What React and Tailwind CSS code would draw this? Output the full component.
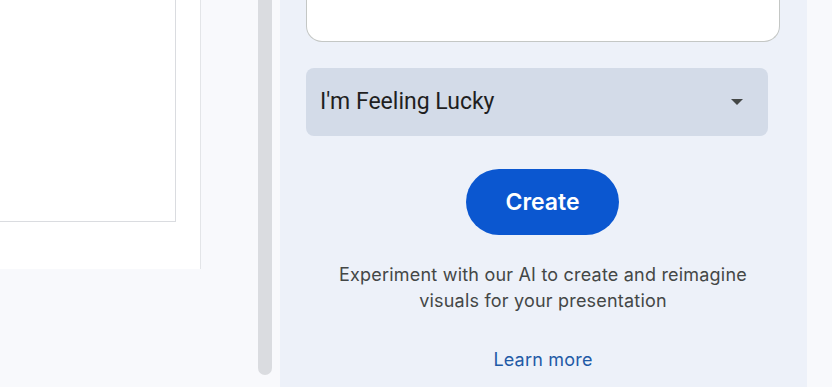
import React from 'react';

function ChevronDown() {
  return (
    <svg width="12" height="6" viewBox="0 0 12 6" className="shrink-0">
      <path d="M0 0 L12 0 L6 6 Z" fill="#444746" />
    </svg>
  );
}

export default function App() {
  return (
    <div className="flex h-[387px] w-[832px] overflow-hidden bg-[#f8f9fc]">
      {/* left canvas area */}
      <div className="flex w-[280px] shrink-0">
        <div className="w-[258px]">
          <div className="h-[269px] w-[201px] border-r border-[#e3e5e8] bg-white">
            <div className="h-[222px] w-[176px] border-b border-r border-[#dadce0] bg-white" />
          </div>
        </div>
        <div className="h-[375px] w-[14px] rounded-b-full bg-[#dadce0]" />
      </div>

      {/* side panel */}
      <div className="flex w-[527px] shrink-0 flex-col bg-[#edf1f9] pl-[26px] pr-[27px] font-['Inter',sans-serif]">
        <div className="h-[42px] w-[474px] rounded-b-[16px] border-x border-b border-[#c4c7c5] bg-white" />

        <div className="mt-[26px] flex h-[68px] w-[462px] items-center justify-between rounded-lg bg-[#d3dbe8] pl-[14px] pr-[25px]">
          <span className="font-['Roboto',sans-serif] text-[23px] text-[#1f1f1f]">I'm Feeling Lucky</span>
          <ChevronDown />
        </div>

        <div className="mt-[33px] flex justify-center pr-[1px]">
          <button className="h-[66px] w-[153px] rounded-full bg-[#0b57d0] text-[23px] font-semibold text-white">
            Create
          </button>
        </div>

        <p className="mt-[27px] text-center text-[18px] leading-[26px] tracking-[0.2px] text-[#444746]">
          Experiment with our AI to create and reimagine
          <br />
          visuals for your presentation
        </p>

        <a className="mt-[34px] text-center text-[18px] leading-[24px] tracking-[0.2px] text-[#1f5aa6]">
          Learn more
        </a>
      </div>

      <div className="flex-1 bg-[#f8f9fc]" />
    </div>
  );
}
